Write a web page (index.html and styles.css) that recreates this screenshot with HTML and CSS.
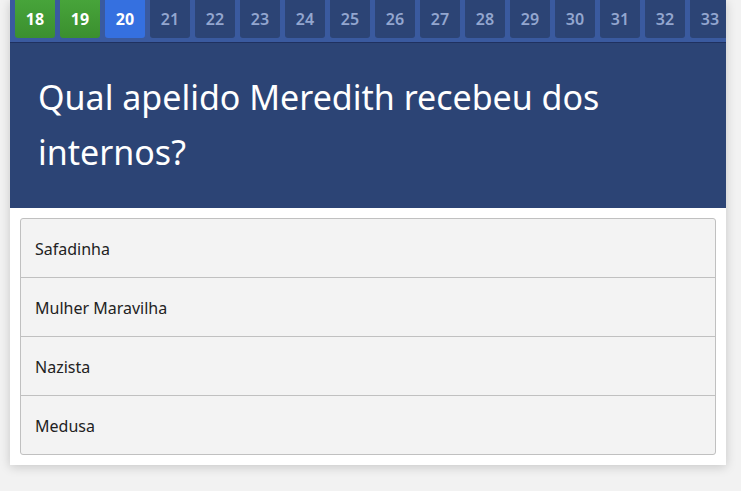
FILE: index.html
```html
<!DOCTYPE html>
<html lang="pt">
<head>
<meta charset="utf-8">
<link rel="stylesheet" href="styles.css">
</head>
<body>
<div class="card">
  <nav class="nav">
    <span class="num done">18</span>
    <span class="num done">19</span>
    <span class="num current">20</span>
    <span class="num">21</span>
    <span class="num">22</span>
    <span class="num">23</span>
    <span class="num">24</span>
    <span class="num">25</span>
    <span class="num">26</span>
    <span class="num">27</span>
    <span class="num">28</span>
    <span class="num">29</span>
    <span class="num">30</span>
    <span class="num">31</span>
    <span class="num">32</span>
    <span class="num">33</span>
  </nav>
  <div class="question">Qual apelido Meredith recebeu dos internos?</div>
  <div class="answers">
    <div class="answer">Safadinha</div>
    <div class="answer">Mulher Maravilha</div>
    <div class="answer">Nazista</div>
    <div class="answer">Medusa</div>
  </div>
</div>
</body>
</html>
```
FILE: styles.css
```css
html, body {
  margin: 0;
  padding: 0;
}
body {
  background: #f2f2f2;
  font-family: "Noto Sans", "Open Sans", sans-serif;
  width: 741px;
  height: 491px;
  overflow: hidden;
}
.card {
  margin-left: 10px;
  width: 716px;
  background: #ffffff;
  box-shadow: 0 2px 10px rgba(0, 0, 0, 0.18);
  padding-bottom: 10px;
}
.nav {
  display: flex;
  gap: 5px;
  height: 42px;
  padding-left: 5px;
  background: #3a5a9f;
  border-bottom: 1px solid #1f3160;
  overflow: hidden;
}
.num {
  flex: 0 0 40px;
  height: 38px;
  display: flex;
  align-items: center;
  justify-content: center;
  background: #2c4475;
  color: #93a6cf;
  font-weight: 600;
  font-size: 16px;
  border-radius: 0 0 3px 3px;
}
.num.done {
  background: linear-gradient(#47a43a, #3b8f2f);
  color: #ffffff;
  font-weight: 700;
}
.num.current {
  background: #3570e0;
  color: #ffffff;
  font-weight: 700;
}
.question {
  background: #2c4475;
  color: #ffffff;
  font-size: 34px;
  line-height: 55px;
  padding: 27px 28px 28px 28px;
  height: 110px;
}
.answers {
  margin: 10px 10px 0 10px;
  border: 1px solid #c0c0c0;
  border-radius: 3px;
  background: #f3f3f3;
}
.answer {
  height: 56px;
  padding-top: 2px;
  display: flex;
  align-items: center;
  padding-left: 14px;
  font-size: 16px;
  color: #222222;
  border-bottom: 1px solid #c0c0c0;
}
.answer:last-child {
  border-bottom: none;
}
```
